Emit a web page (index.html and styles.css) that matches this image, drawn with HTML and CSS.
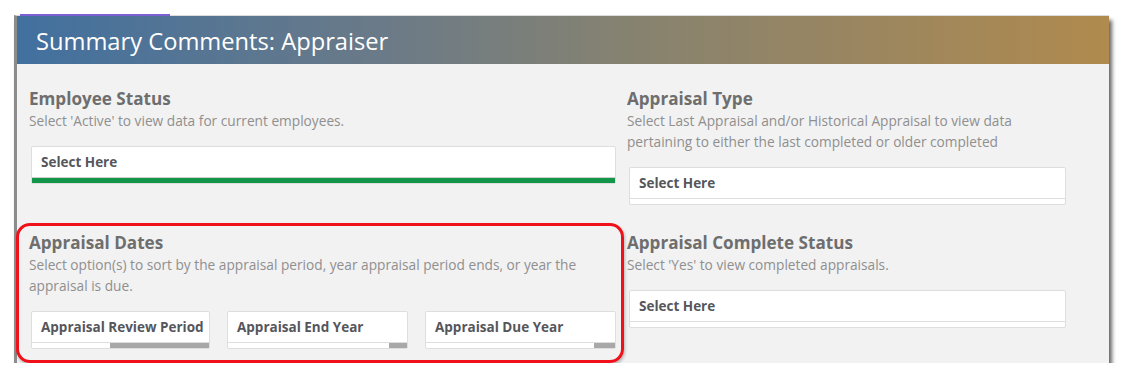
FILE: index.html
```html
<!DOCTYPE html>
<html lang="en">
<head>
  <meta charset="UTF-8">
  <title>Summary Comments: Appraiser</title>
  <link rel="stylesheet" href="styles.css">
</head>
<body>

<div class="panel">
  <header class="panel-header">
    <h1>Summary Comments: Appraiser</h1>
  </header>

  <div class="filters">
    <div class="filter">
      <h2>Employee Status</h2>
      <p>Select 'Active' to view data for current employees.</p>
      <div class="select-box">
        <div class="select-label">Select Here</div>
        <div class="select-bar bar-green"></div>
      </div>
    </div>

    <div class="filter">
      <h2>Appraisal Type</h2>
      <p>Select Last Appraisal and/or Historical Appraisal to view data<br>pertaining to either the last completed or older completed</p>
      <div class="select-box">
        <div class="select-label">Select Here</div>
        <div class="select-bar"></div>
      </div>
    </div>

    <div class="filter highlighted">
      <h2>Appraisal Dates</h2>
      <p>Select option(s) to sort by the appraisal period, year appraisal period ends, or year the<br>appraisal is due.</p>
      <div class="date-boxes">
        <div class="select-box">
          <div class="select-label">Appraisal Review Period</div>
          <div class="select-bar"><span class="scroll" style="width: 56%"></span></div>
        </div>
        <div class="select-box">
          <div class="select-label">Appraisal End Year</div>
          <div class="select-bar"><span class="scroll" style="width: 10%"></span></div>
        </div>
        <div class="select-box">
          <div class="select-label">Appraisal Due Year</div>
          <div class="select-bar"><span class="scroll" style="width: 11%"></span></div>
        </div>
      </div>
    </div>

    <div class="filter">
      <h2>Appraisal Complete Status</h2>
      <p>Select 'Yes' to view completed appraisals.</p>
      <div class="select-box">
        <div class="select-label">Select Here</div>
        <div class="select-bar"></div>
      </div>
    </div>
  </div>
</div>

</body>
</html>
```

FILE: styles.css
```css
body {
  margin: 0;
  padding: 0;
  background-color: #ffffff;
  font-family: "Open Sans", Arial, sans-serif;
}
.panel {
  margin: 15px 0 0 14px;
  width: 1095px;
  border-top: 1px solid #dcdcdc;
  border-left: 3px solid #8c8c8c;
  box-sizing: border-box;
  box-shadow: 3px 5px 4px rgba(0, 0, 0, 0.6);
}
.panel-header {
  position: relative;
  height: 48px;
  padding-left: 19px;
  background: linear-gradient(to right, #41709f 0%, #6a7a88 33%, #858271 55%, #b08a4e 100%);
}
.panel-header::before {
  content: "";
  position: absolute;
  left: 3px;
  top: -2px;
  width: 150px;
  height: 2px;
  background-color: #7b5fd3;
}
.panel-header h1 {
  margin: 0;
  font-size: 23.7px;
  font-weight: 400;
  line-height: 50px;
  color: #ffffff;
}
.filters {
  display: grid;
  grid-template-columns: 588px 440px;
  column-gap: 10px;
  row-gap: 28px;
  padding: 25px 0 14px 12px;
  background-color: #f2f2f2;
}
.filter h2 {
  margin: 0;
  font-size: 17.1px;
  font-weight: 700;
  line-height: 20px;
  color: #6e6e6e;
}
.filter p {
  margin: 1px 0 15px 0;
  font-size: 13.7px;
  line-height: 21px;
  color: #8f8f8f;
}
.highlighted {
  position: relative;
}
.highlighted::after {
  content: "";
  position: absolute;
  left: -13px;
  top: -10px;
  right: -7px;
  bottom: -14px;
  border: 3px solid #f0101a;
  border-radius: 14px;
  box-shadow: 1px 2px 3px rgba(0, 0, 0, 0.25);
}
.select-box {
  margin: 0 1px 0 2px;
  background-color: #ffffff;
  border: 1px solid #dedede;
  border-radius: 2px;
}
.select-label {
  height: 30px;
  padding-left: 9px;
  font-size: 13.5px;
  font-weight: 700;
  line-height: 30px;
  color: #55565c;
  white-space: nowrap;
}
.select-bar {
  display: flex;
  justify-content: flex-end;
  height: 5px;
  border-top: 1px solid #dedede;
}
.bar-green {
  background-color: #14964a;
  border-top-color: #d0d0d0;
}
.scroll {
  display: block;
  height: 100%;
  background-color: #a8a8a8;
}
.date-boxes {
  display: grid;
  grid-template-columns: 179px 181px 1fr;
  column-gap: 17px;
  margin: 0 1px 0 2px;
}
.date-boxes .select-box {
  margin: 0;
}
```
